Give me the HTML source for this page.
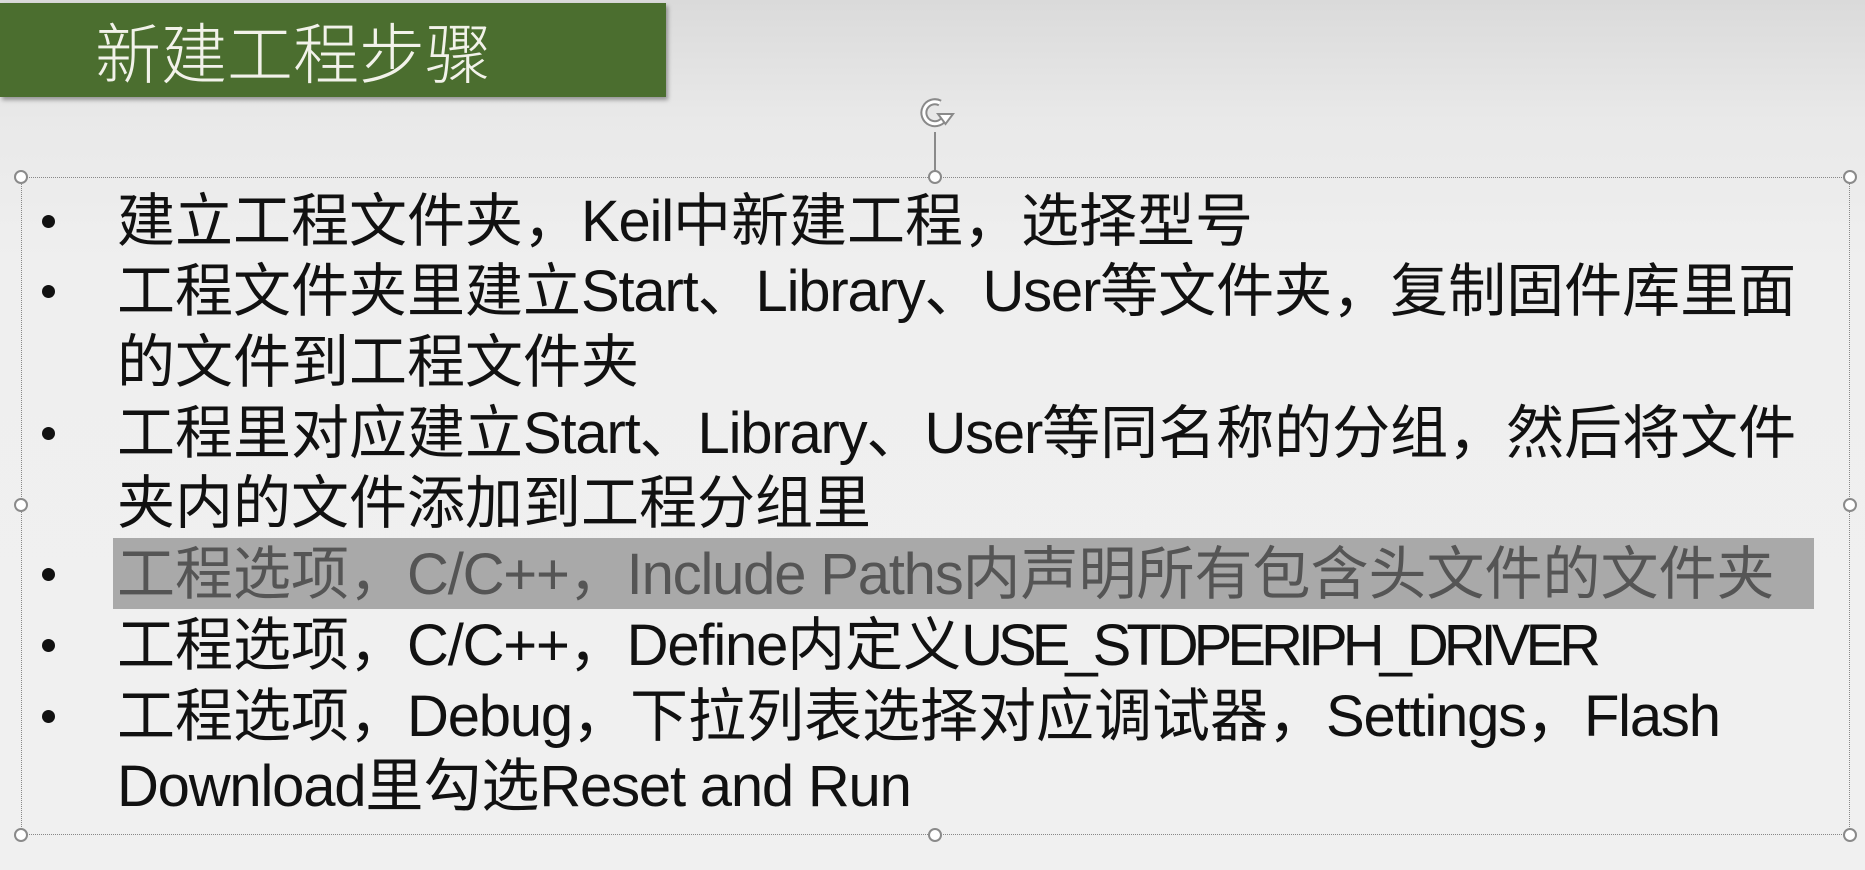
<!DOCTYPE html>
<html><head><meta charset="utf-8"><style>
html,body{margin:0;padding:0}
body{width:1865px;height:870px;overflow:hidden;position:relative;background:linear-gradient(#dadada 0px,#e9e9e9 120px,#efefef 260px,#f0f0f0 870px);font-family:"Liberation Sans","Noto Sans CJK SC",sans-serif}
.title{position:absolute;left:0;top:3px;width:666px;height:94px;background:#4b6e2f;box-shadow:2px 3px 4px rgba(0,0,0,.35)}
.title span{position:absolute;left:95px;top:10px;font-size:66px;line-height:74px;color:#f2f2ea;font-family:"Noto Sans CJK SC",sans-serif;font-weight:300}
.box{position:absolute;left:21px;top:177px;width:1829px;height:658px;border:1px dotted #888;box-sizing:border-box}
.h{position:absolute;width:14px;height:14px;border:2px solid #8a8a8a;border-radius:50%;background:#fff;box-sizing:border-box}
.l{position:absolute;left:117px;height:71px;line-height:71px;font-size:58px;white-space:nowrap;color:#111}
.l i{font-style:normal;letter-spacing:-1.2px}
.l u{text-decoration:none;letter-spacing:-5px}
.b{position:absolute;left:42px;width:13px;height:13px;border-radius:50%;background:#111}
.hl{position:absolute;left:113px;top:538px;width:1701px;height:71px;background:#a9a9a9}
</style></head><body>
<div class="title"><span>新建工程步骤</span></div>
<svg style="position:absolute;left:915px;top:93px" width="42" height="42" viewBox="0 0 42 42">
<path d="M30 24 A11 11 0 1 1 25 10" fill="none" stroke="#8a8a8a" stroke-width="7"/>
<path d="M30 24 A11 11 0 1 1 25 10" fill="none" stroke="#fff" stroke-width="3"/>
<path d="M23 21 L38 21 L30.5 31 Z" fill="#fff" stroke="#8a8a8a" stroke-width="2"/>
</svg>
<div style="position:absolute;left:934px;top:132px;width:2px;height:40px;background:#8a8a8a"></div>
<div class="box"></div>
<div class="h" style="left:14px;top:170px"></div>
<div class="h" style="left:928px;top:170px"></div>
<div class="h" style="left:1843px;top:170px"></div>
<div class="h" style="left:14px;top:498px"></div>
<div class="h" style="left:1843px;top:498px"></div>
<div class="h" style="left:14px;top:828px"></div>
<div class="h" style="left:928px;top:828px"></div>
<div class="h" style="left:1843px;top:828px"></div>
<div class="hl"></div>
<div class="b" style="top:215px"></div>
<div class="b" style="top:285px"></div>
<div class="b" style="top:427px"></div>
<div class="b" style="top:568px"></div>
<div class="b" style="top:639px"></div>
<div class="b" style="top:710px"></div>
<div class="l" style="top:186px">建立工程文件夹，<i>Keil</i>中新建工程，选择型号</div>
<div class="l" style="top:256px">工程文件夹里建立<i>Start</i>、<i>Library</i>、<i>User</i>等文件夹，复制固件库里面</div>
<div class="l" style="top:327px">的文件到工程文件夹</div>
<div class="l" style="top:398px">工程里对应建立<i>Start</i>、<i>Library</i>、<i>User</i>等同名称的分组，然后将文件</div>
<div class="l" style="top:468px">夹内的文件添加到工程分组里</div>
<div class="l" style="top:539px;color:#555">工程选项，<i>C/C++</i>，<i>Include Paths</i>内声明所有包含头文件的文件夹</div>
<div class="l" style="top:610px">工程选项，<i>C/C++</i>，<i>Define</i>内定义<u>USE_STDPERIPH_DRIVER</u></div>
<div class="l" style="top:681px">工程选项，<i>Debug</i>，下拉列表选择对应调试器，<i>Settings</i>，<i>Flash</i></div>
<div class="l" style="top:751px"><i>Download</i>里勾选<i>Reset and Run</i></div>
</body></html>
